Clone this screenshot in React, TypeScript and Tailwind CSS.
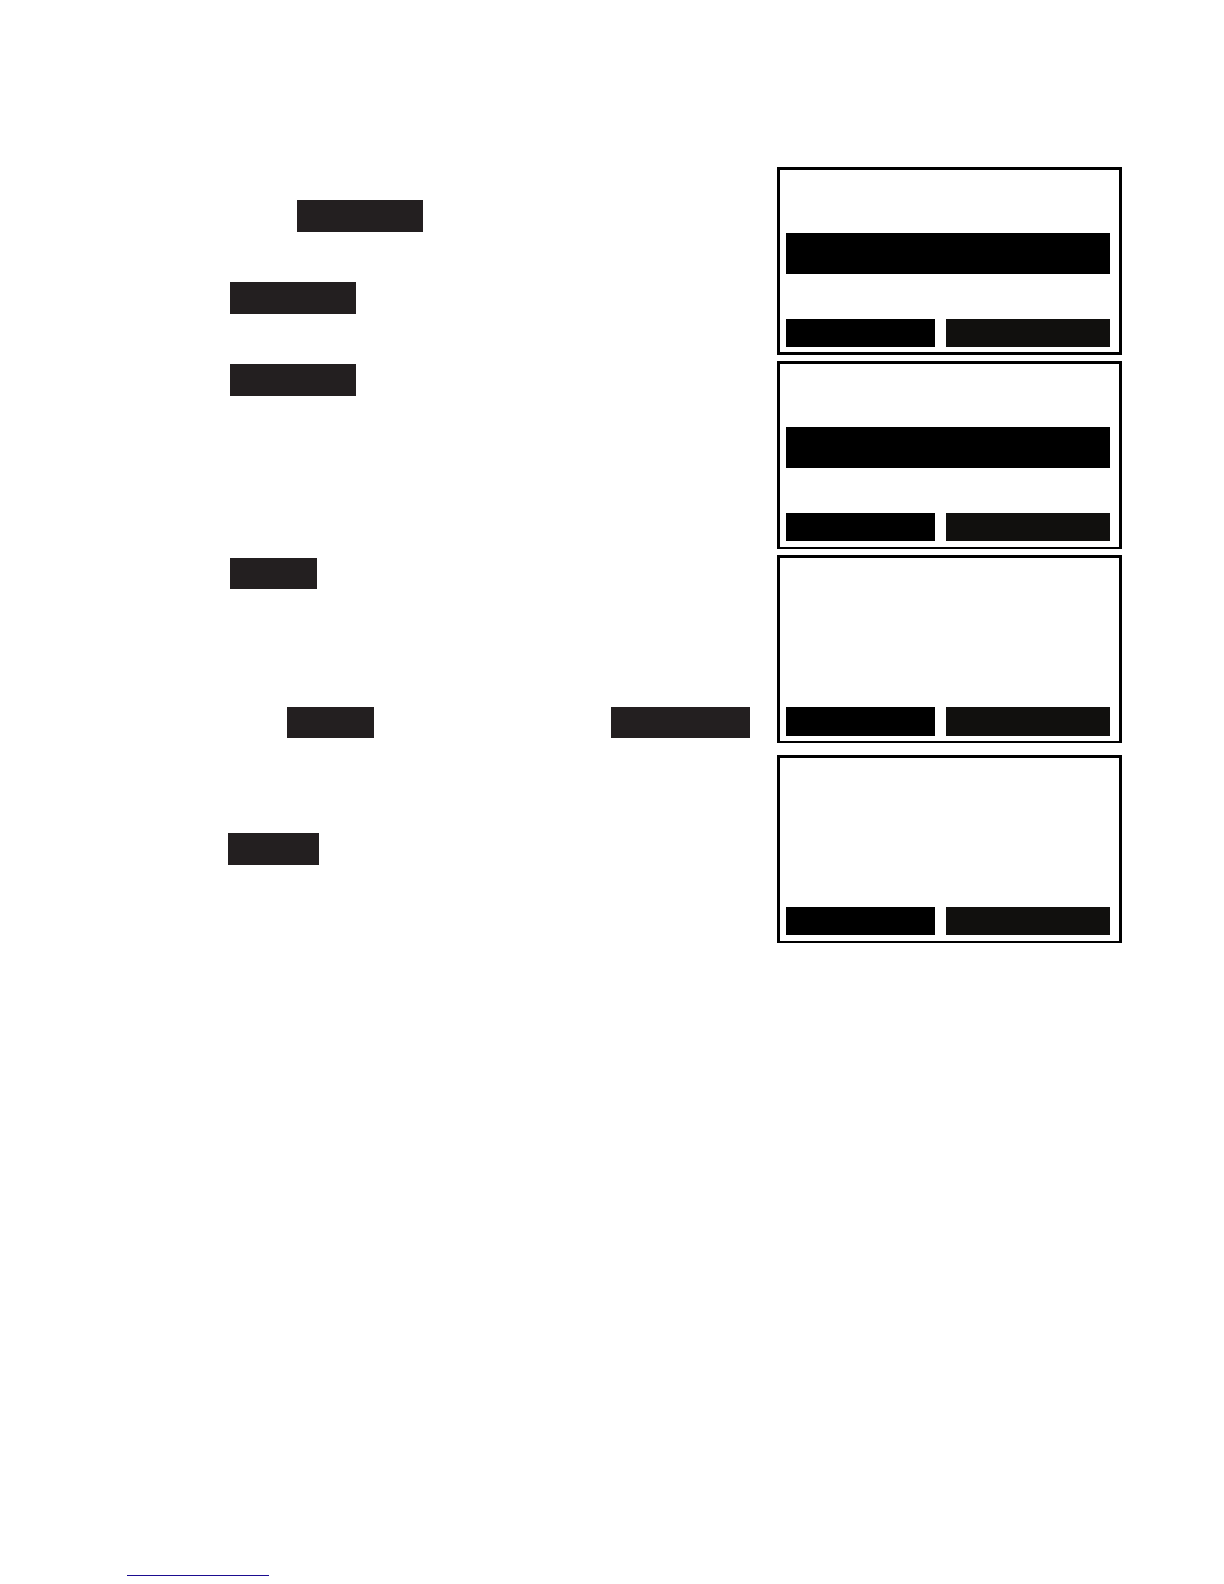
import React from 'react';

interface Step {
  row: string;
  keys: string[];
}

const steps: Step[] = [
  { row: 'mt-[33px] h-8 pl-[69px]', keys: ['w-[126px]'] },
  { row: 'mt-[50px] h-8 pl-0.5', keys: ['w-[126px]'] },
  { row: 'mt-[50px] h-8 pl-0.5', keys: ['w-[126px]'] },
  { row: 'mt-[162px] h-[31px] pl-0.5', keys: ['w-[87px]'] },
  { row: 'mt-[118px] h-[31px] pl-[59px]', keys: ['w-[87px]', 'w-[139px]'] },
  { row: 'mt-[95px] h-8', keys: ['w-[91px]'] },
];

const StepRow: React.FC<Step> = ({ row, keys }) => (
  <li className={`flex justify-between ${row}`}>
    {keys.map((width, i) => (
      <span key={i} className={`block bg-[#231f20] ${width}`} />
    ))}
  </li>
);

// Handset display: optional highlighted line, two soft keys along the bottom
const Screen: React.FC<{ highlighted?: boolean; className: string; keyHeight?: string }> = ({
  highlighted = false,
  className,
  keyHeight = 'h-7',
}) => (
  <div className={`flex h-[188px] flex-col border-3 border-black pl-1.5 pr-[9px] ${className}`}>
    {highlighted && <div className="mt-[63px] h-[41px] bg-black" />}
    <div className={`mt-auto flex gap-[11px] ${keyHeight}`}>
      <span className="block w-[149px] bg-black" />
      <span className="block flex-1 bg-[#11100e]" />
    </div>
  </div>
);

const App: React.FC = () => {
  return (
    <div className="flex min-h-screen flex-col bg-white pb-2 font-['Liberation_Sans',sans-serif]">
      <main className="flex gap-[27px] pl-[228px] pr-[102px] pt-[167px]">
        <ol className="flex flex-1 flex-col">
          {steps.map((step, i) => (
            <StepRow key={i} {...step} />
          ))}
        </ol>

        <div className="flex w-[345px] shrink-0 flex-col gap-1.5">
          <Screen highlighted className="pb-[5px]" />
          <Screen highlighted className="border-b-2 pb-1.5" />
          <Screen className="border-b-2 pb-[5px]" keyHeight="h-[29px]" />
          <Screen className="mt-1.5 border-b-2 pb-1.5" />
        </div>
      </main>

      <footer className="mt-auto pl-[127px]">
        <a href="#" className="block h-px w-[142px] bg-[#1b0c90]" />
      </footer>
    </div>
  );
};

export default App;
